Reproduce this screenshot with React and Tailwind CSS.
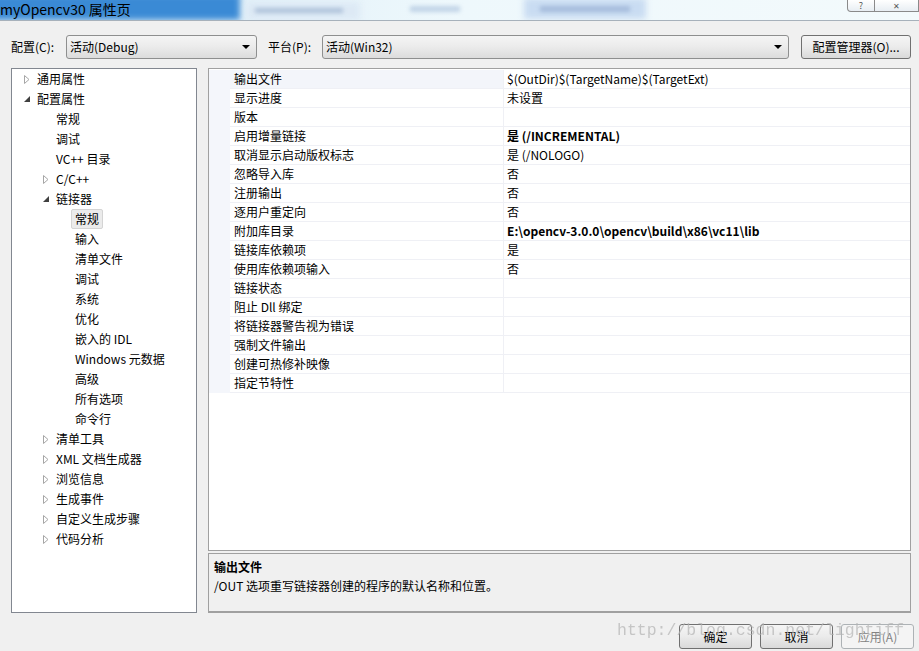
import React from "react";

const F = "font-['Noto_Sans_CJK_SC',sans-serif]";

function Collapsed() {
  return (
    <svg width="6" height="9" viewBox="0 0 6 9" className="block">
      <polygon points="0.5,0.5 5,4.5 0.5,8.5" fill="#ffffff" stroke="#a6a6a6" strokeWidth="1" />
    </svg>
  );
}
function Expanded() {
  return (
    <svg width="6" height="6" viewBox="0 0 6 6" className="block">
      <polygon points="6,0 6,6 0,6" fill="#404040" />
    </svg>
  );
}

const tree = [
  { t: "通用属性", l: 1, a: "c" },
  { t: "配置属性", l: 1, a: "e" },
  { t: "常规", l: 2 },
  { t: "调试", l: 2 },
  { t: "VC++ 目录", l: 2 },
  { t: "C/C++", l: 2, a: "c" },
  { t: "链接器", l: 2, a: "e" },
  { t: "常规", l: 3, s: true },
  { t: "输入", l: 3 },
  { t: "清单文件", l: 3 },
  { t: "调试", l: 3 },
  { t: "系统", l: 3 },
  { t: "优化", l: 3 },
  { t: "嵌入的 IDL", l: 3 },
  { t: "Windows 元数据", l: 3 },
  { t: "高级", l: 3 },
  { t: "所有选项", l: 3 },
  { t: "命令行", l: 3 },
  { t: "清单工具", l: 2, a: "c" },
  { t: "XML 文档生成器", l: 2, a: "c" },
  { t: "浏览信息", l: 2, a: "c" },
  { t: "生成事件", l: 2, a: "c" },
  { t: "自定义生成步骤", l: 2, a: "c" },
  { t: "代码分析", l: 2, a: "c" },
];

const props = [
  ["输出文件", "$(OutDir)$(TargetName)$(TargetExt)"],
  ["显示进度", "未设置"],
  ["版本", ""],
  ["启用增量链接", "是 (/INCREMENTAL)", true],
  ["取消显示启动版权标志", "是 (/NOLOGO)"],
  ["忽略导入库", "否"],
  ["注册输出", "否"],
  ["逐用户重定向", "否"],
  ["附加库目录", "E:\\opencv-3.0.0\\opencv\\build\\x86\\vc11\\lib", true],
  ["链接库依赖项", "是"],
  ["使用库依赖项输入", "否"],
  ["链接状态", ""],
  ["阻止 Dll 绑定", ""],
  ["将链接器警告视为错误", ""],
  ["强制文件输出", ""],
  ["创建可热修补映像", ""],
  ["指定节特性", ""],
];

function TreeRow({ item }) {
  const pl = item.l === 1 ? "pl-[12px]" : item.l === 2 ? "pl-[31px]" : "pl-[59px]";
  return (
    <div className={`flex h-[20px] items-center ${pl}`}>
      {item.l !== 3 && (
        <div className="flex w-[9px] items-center">
          {item.a === "c" && <Collapsed />}
          {item.a === "e" && <Expanded />}
        </div>
      )}
      <span
        className={`flex h-[20px] items-center rounded-[2px] border px-[3px] leading-none ${
          item.s ? "border-[#d4d4d4] bg-[#ebebeb]" : "border-transparent"
        }`}
      >
        {item.t}
      </span>
    </div>
  );
}

function Select({ w, text }) {
  return (
    <div
      className={`${w} flex h-[24px] items-center justify-between rounded-[3px] border border-[#8e8f8f] bg-linear-to-b from-[#f5f5f5] via-[#ebebeb] to-[#dcdcdc] pl-[3px] pr-[6px]`}
    >
      <span className="leading-none">{text}</span>
      <svg width="8" height="4" viewBox="0 0 8 4">
        <polygon points="0,0 8,0 4,4" fill="#000" />
      </svg>
    </div>
  );
}

function Btn({ children, disabled }) {
  return (
    <div
      className={`flex h-[25px] w-[73px] items-center justify-center rounded-[3px] border leading-none ${
        disabled
          ? "border-[#adb2b5] bg-[#f4f4f4] text-[#838383]"
          : "border-[#707070] bg-linear-to-b from-[#f5f5f5] via-[#ebebeb] to-[#d9d9d9] text-black"
      }`}
    >
      {children}
    </div>
  );
}

export default function App() {
  return (
    <div className={`${F} relative flex h-[651px] w-[919px] flex-col overflow-hidden bg-[#f0f0f0] text-[12px] text-black`}>
      {/* title bar */}
      <div className="relative h-[21px] shrink-0 overflow-hidden border-b border-[#a7b1bb] bg-linear-to-r from-[#d6eaf6] via-[#eef8fc] to-[#f3fafc]">
        <div className="absolute left-[-10px] top-[-6px] h-[26px] w-[250px] bg-[#3a8ad5] blur-[3px]" />
        <div className="absolute left-[246px] top-[2px] h-[18px] w-[114px] bg-[#dde9f5] blur-[3px]" />
        <div className="absolute left-[255px] top-[8px] h-[5px] w-[88px] bg-[#8fa8c8] opacity-60 blur-[2px]" />
        <div className="absolute left-[410px] top-[6px] h-[6px] w-[50px] bg-[#a4bcd9] opacity-60 blur-[2px]" />
        <div className="absolute left-[524px] top-[-2px] h-[21px] w-[122px] bg-[#c9dcf2] blur-[3px]" />
        <div className="absolute left-[540px] top-[6px] h-[6px] w-[90px] bg-[#8ea7cd] opacity-60 blur-[2px]" />
        <div className="absolute left-0 top-[1px] text-[14px] leading-[16px] text-black">myOpencv30 属性页</div>
        <div className="absolute right-0 top-0 flex h-[12px]">
          <div className="flex w-[28px] items-center justify-center rounded-bl-[4px] border-x border-b border-[#8a8a8a] bg-linear-to-b from-[#ffffff] to-[#e8eef3] text-[9px] leading-none text-[#555]">
            ?
          </div>
          <div className="flex w-[44px] items-center justify-center border-b border-r border-[#8a8a8a] bg-linear-to-b from-[#ffffff] to-[#e8eef3] text-[8px] leading-none text-[#555]">
            ✕
          </div>
        </div>
      </div>

      {/* config row */}
      <div className="mt-[14px] flex h-[24px] shrink-0 items-center pl-[11px]">
        <span className="w-[55px] leading-none">配置(C):</span>
        <Select w="w-[191px]" text="活动(Debug)" />
        <span className="ml-[11px] w-[54px] leading-none">平台(P):</span>
        <Select w="w-[467px]" text="活动(Win32)" />
        <div className="ml-[12px] flex h-[24px] w-[110px] items-center justify-center rounded-[3px] border border-[#707070] bg-linear-to-b from-[#f5f5f5] via-[#ebebeb] to-[#d9d9d9] leading-none">
          配置管理器(O)...
        </div>
      </div>

      {/* panels */}
      <div className="mt-[9px] flex h-[545px] shrink-0 pl-[11px]">
        <div className="w-[186px] border border-[#828790] bg-white">
          {tree.map((it, i) => (
            <TreeRow key={i} item={it} />
          ))}
        </div>
        <div className="ml-[11px] flex w-[703px] flex-col">
          <div className="h-[483px] border border-[#a0a0a0] bg-white pt-[1px]">
            {props.map(([n, v, b], i) => (
              <div key={i} className="flex h-[19px]">
                <div className="w-[21px] bg-[#f4f6fb]" />
                <div
                  className={`flex w-[274px] items-center border-b border-r border-[#eff0f5] pl-[4px] leading-none ${
                    i === 0 ? "bg-[#f3f5fa]" : ""
                  }`}
                >
                  {n}
                </div>
                <div className={`flex flex-1 items-center border-b border-[#eff0f5] pl-[3px] leading-none ${b ? "font-bold" : ""}`}>
                  {v}
                </div>
              </div>
            ))}
          </div>
          <div className="mt-[2px] h-[60px] border border-b-2 border-[#a0a0a0] bg-[#f0f0f0] pl-[5px]">
            <div className="mt-[4px] font-bold leading-[18px]">输出文件</div>
            <div className="leading-[20px]">/OUT 选项重写链接器创建的程序的默认名称和位置。</div>
          </div>
        </div>
      </div>

      {/* bottom buttons */}
      <div className="mt-[11px] flex justify-end gap-[8px] pr-[5px]">
        <Btn>确定</Btn>
        <Btn>取消</Btn>
        <Btn disabled>应用(A)</Btn>
      </div>

      {/* watermark */}
      <div className="pointer-events-none absolute left-[617px] top-[621px] font-['Liberation_Mono',monospace] text-[16.5px] leading-[20px] text-[#b4b4b4] opacity-70">
        http://blog.csdn.net/lightiff
      </div>
    </div>
  );
}
